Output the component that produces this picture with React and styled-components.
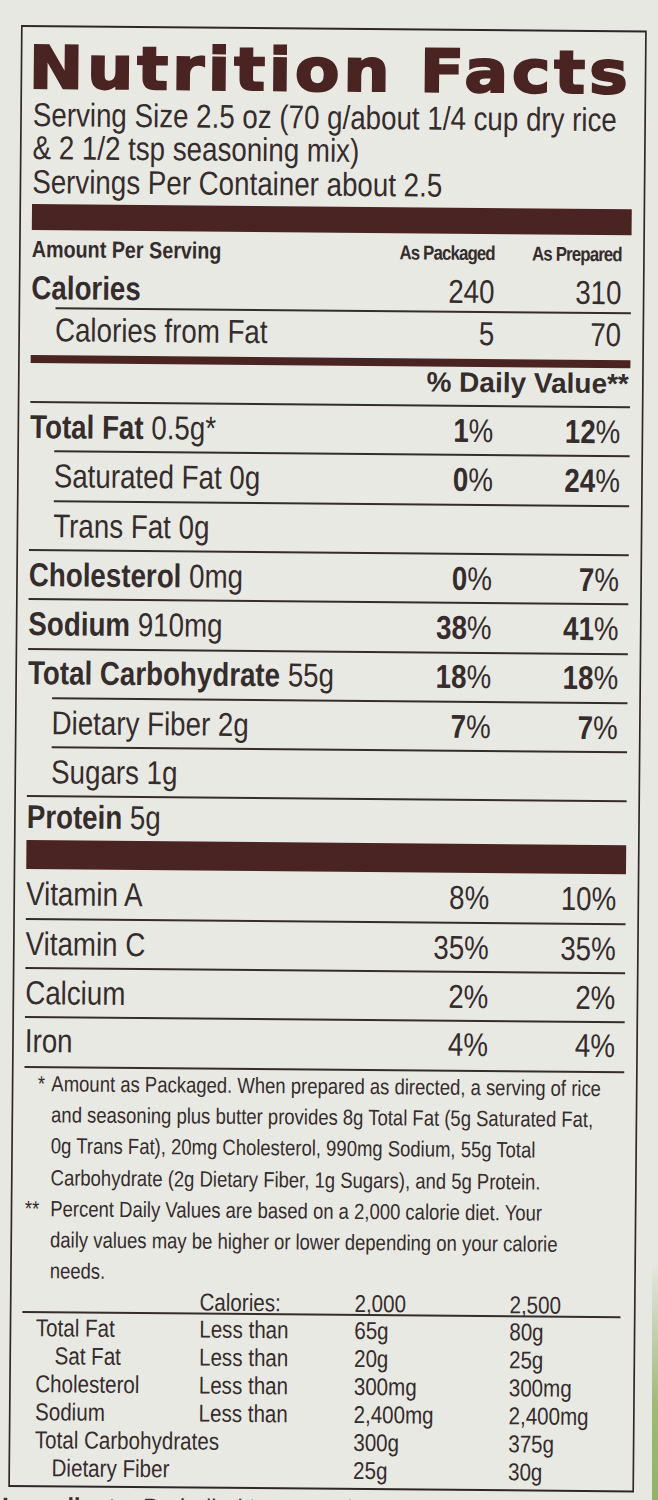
import React from "react";
import styled, { createGlobalStyle } from "styled-components";

// The label is printed in a condensed face; no condensed font is installed,
// so the whole sheet is laid out wide and squeezed horizontally by SQUEEZE.
const SQUEEZE = 0.84;
const w = (v) => `${(v / SQUEEZE).toFixed(2)}px`;

const INK = "#352c2c";
const MAROON = "#4a2323";
const SANS = `"Liberation Sans", Arial, sans-serif`;

const GlobalStyle = createGlobalStyle`
  body {
    margin: 0;
    background: #e8e8e3;
  }
`;

const Page = styled.div`
  width: 658px;
  height: 1500px;
  box-sizing: border-box;
  padding: 25px 0 0 21px;
  overflow: hidden;
  background: linear-gradient(180deg, rgba(160, 192, 120, 0) 0, #9dbb76 60%, #8fb36a 100%)
    no-repeat 652px 1260px / 6px 240px;
`;

const Sheet = styled.div`
  width: ${w(626)};
  transform-origin: 0 0;
  transform: rotate(0.5deg) scaleX(${SQUEEZE});
  font-family: ${SANS};
  color: ${INK};
`;

const Label = styled.div`
  height: 1462px;
  box-sizing: border-box;
  border: 2px solid #2f2727;
  border-left-width: ${w(2)};
  border-right-width: ${w(2)};
  padding: 0 ${w(12)} 0 ${w(11)};
  background: #e9e9e4;
`;

const Title = styled.h1`
  margin: 0 0 0 ${w(-4)};
  padding-top: 10.6px;
  font-family: "DejaVu Sans", sans-serif;
  font-weight: 700;
  font-size: 59px;
  line-height: 60px;
  letter-spacing: 3.5px;
  color: ${MAROON};
  -webkit-text-stroke: 2px ${MAROON};
  white-space: nowrap;
  transform-origin: 0 50%;
  transform: scaleX(${(1.1 / SQUEEZE).toFixed(4)});
`;

const Serving = styled.div`
  font-size: 33px;
  line-height: 33.5px;
  white-space: nowrap;
`;

const Bar = styled.div`
  height: ${(p) => p.$h}px;
  background: ${MAROON};
  margin-top: ${(p) => p.$mt || 0}px;
`;

const Rule = styled.div`
  height: 2px;
  background: ${INK};
  margin-left: ${(p) => (p.$indent ? w(24) : 0)};
`;

const Row = styled.div`
  display: grid;
  grid-template-columns: 1fr ${w(128)} ${w(127)};
  padding-right: ${w(9.5)};
  padding-bottom: ${(p) => p.$pb || 0}px;
  height: ${(p) => p.$h}px;
  box-sizing: border-box;
  align-items: center;
  font-size: ${(p) => p.$size || 33}px;
  line-height: 1.2;
  white-space: nowrap;
`;

const Name = styled.div`
  padding-left: ${(p) => w(p.$indent || 0)};
`;

const Bold = styled.span`
  font-weight: 700;
`;

const Value = styled.div`
  text-align: right;
`;

const ColHead = styled.div`
  text-align: right;
  font-weight: 700;
  font-size: 20px;
  letter-spacing: -1px;
`;

const DailyRow = styled.div`
  height: 38px;
  padding-bottom: 6px;
  box-sizing: border-box;
  display: flex;
  align-items: center;
  justify-content: flex-end;
  padding-right: ${w(1.7)};
`;

// this line is set in a regular-width bold, so undo the squeeze
const Wide = styled.span`
  display: inline-block;
  font-weight: 700;
  font-size: 28px;
  line-height: 1.2;
  transform-origin: 100% 50%;
  transform: scaleX(${(1 / SQUEEZE).toFixed(4)});
`;

const Notes = styled.div`
  font-size: 22px;
  line-height: 31.2px;
  white-space: nowrap;
`;

const Note = styled.div`
  display: flex;
`;

const Mark = styled.span`
  width: ${w(27)};
  flex: none;
  box-sizing: border-box;
  padding-left: ${(p) => w(p.$at)};
`;

const TableRow = styled.div`
  display: grid;
  grid-template-columns: ${w(177)} ${w(155)} ${w(155)} 1fr;
  height: ${(p) => p.$h || 28}px;
  align-items: center;
  font-size: 24.5px;
  line-height: 1.2;
  white-space: nowrap;
`;

const Cell = styled.div`
  padding-left: ${(p) => w(p.$indent || 0)};
`;

const TableRule = styled.div`
  height: 2px;
  background: ${INK};
  margin-right: ${w(2)};
`;

const Below = styled.div`
  margin: 6px 0 0 ${w(-6)};
  font-size: 28px;
  line-height: 30px;
  white-space: nowrap;
`;

const Pct = ({ n }) =>
  n ? (
    <>
      <Bold>{n}</Bold>%
    </>
  ) : null;

const nutrients = [
  { bold: "Total Fat", rest: " 0.5g*", a: "1", b: "12", rule: "indent" },
  { name: "Saturated Fat 0g", a: "0", b: "24", indent: 24, rule: "indent" },
  { name: "Trans Fat 0g", indent: 24, rule: "full" },
  { bold: "Cholesterol", rest: " 0mg", a: "0", b: "7", rule: "full" },
  { bold: "Sodium", rest: " 910mg", a: "38", b: "41", rule: "full" },
  { bold: "Total Carbohydrate", rest: " 55g", a: "18", b: "18", rule: "indent" },
  { name: "Dietary Fiber 2g", a: "7", b: "7", indent: 24, rule: "indent" },
  { name: "Sugars 1g", indent: 24, rule: "full" },
];

const vitamins = [
  ["Vitamin A", "8%", "10%", 48.5],
  ["Vitamin C", "35%", "35%", 47],
  ["Calcium", "2%", "2%", 47],
  ["Iron", "4%", "4%", 48],
];

const limits = [
  ["Total Fat", 0, "Less than", "65g", "80g"],
  ["Sat Fat", 19, "Less than", "20g", "25g"],
  ["Cholesterol", 0, "Less than", "300mg", "300mg"],
  ["Sodium", 0, "Less than", "2,400mg", "2,400mg"],
  ["Total Carbohydrates", 0, "", "300g", "375g"],
  ["Dietary Fiber", 17, "", "25g", "30g"],
];

export default function App() {
  return (
    <Page>
      <GlobalStyle />
      <Sheet>
        <Label>
          <Title>Nutrition Facts</Title>
          <Serving>
            Serving Size 2.5 oz (70 g/about 1/4 cup dry rice
            <br />& 2 1/2 tsp seasoning mix)
            <br />
            Servings Per Container about 2.5
          </Serving>
          <Bar $h={26} $mt={6} />

          <Row $h={38} $size={23.5}>
            <Name>
              <Bold>Amount Per Serving</Bold>
            </Name>
            <ColHead>As Packaged</ColHead>
            <ColHead>As Prepared</ColHead>
          </Row>
          <Row $h={38.6} $pb={12}>
            <Name>
              <Bold>Calories</Bold>
            </Name>
            <Value>240</Value>
            <Value>310</Value>
          </Row>
          <Rule $indent />
          <Row $h={46.4} $pb={4}>
            <Name $indent={24}>Calories from Fat</Name>
            <Value>5</Value>
            <Value>70</Value>
          </Row>
          <Bar $h={8} />
          <DailyRow>
            <Wide>% Daily Value**</Wide>
          </DailyRow>
          <Rule />

          {nutrients.map((n) => (
            <React.Fragment key={n.bold || n.name}>
              <Row $h={47.3}>
                <Name $indent={n.indent}>
                  {n.bold ? (
                    <>
                      <Bold>{n.bold}</Bold>
                      {n.rest}
                    </>
                  ) : (
                    n.name
                  )}
                </Name>
                <Value>
                  <Pct n={n.a} />
                </Value>
                <Value>
                  <Pct n={n.b} />
                </Value>
              </Row>
              <Rule $indent={n.rule === "indent"} />
            </React.Fragment>
          ))}
          <Row $h={43} $pb={12}>
            <Name>
              <Bold>Protein</Bold> 5g
            </Name>
          </Row>
          <Bar $h={29} />

          {vitamins.map(([name, a, b, h]) => (
            <React.Fragment key={name}>
              <Row $h={h} $pb={name === "Iron" ? 2 : 0}>
                <Name>{name}</Name>
                <Value>{a}</Value>
                <Value>{b}</Value>
              </Row>
              <Rule />
            </React.Fragment>
          ))}

          <Notes>
            <Note>
              <Mark $at={13.5}>*</Mark>
              <div>
                Amount as Packaged. When prepared as directed, a serving of rice
                <br />
                and seasoning plus butter provides 8g Total Fat (5g Saturated Fat,
                <br />
                0g Trans Fat), 20mg Cholesterol, 990mg Sodium, 55g Total
                <br />
                Carbohydrate (2g Dietary Fiber, 1g Sugars), and 5g Protein.
              </div>
            </Note>
            <Note>
              <Mark $at={1.5}>**</Mark>
              <div>
                Percent Daily Values are based on a 2,000 calorie diet. Your
                <br />
                daily values may be higher or lower depending on your calorie
                <br />
                needs.
              </div>
            </Note>
          </Notes>

          <TableRow $h={25}>
            <Cell />
            <Cell>Calories:</Cell>
            <Cell>2,000</Cell>
            <Cell>2,500</Cell>
          </TableRow>
          <TableRule />
          {limits.map(([name, indent, cond, a, b]) => (
            <TableRow key={name}>
              <Cell $indent={13.5 + indent}>{name}</Cell>
              <Cell>{cond}</Cell>
              <Cell>{a}</Cell>
              <Cell>{b}</Cell>
            </TableRow>
          ))}
        </Label>
        <Below>
          <Bold>Ingredients:</Bold> Parboiled Long Grain Rice, Seasoning
        </Below>
      </Sheet>
    </Page>
  );
}
